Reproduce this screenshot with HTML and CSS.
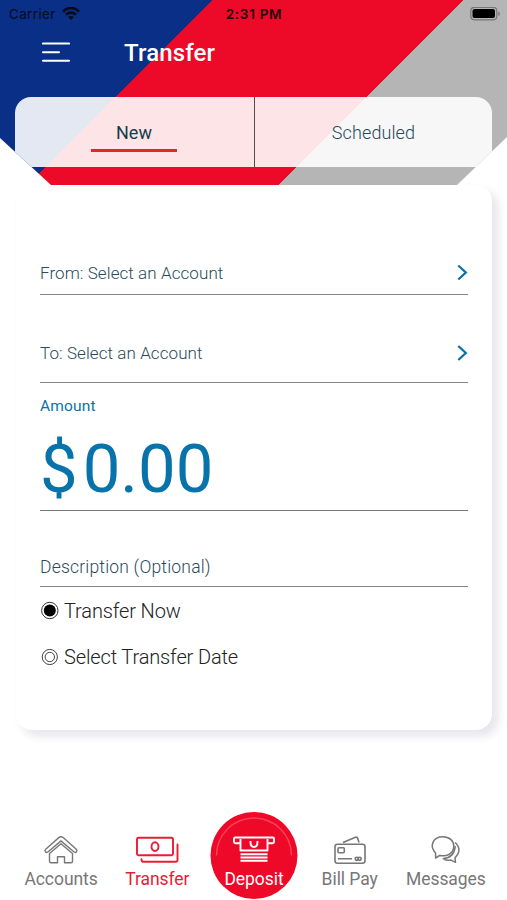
FILE: index.html
```html
<!DOCTYPE html>
<html lang="en">
<head>
<meta charset="utf-8">
<title>Transfer</title>
<link rel="stylesheet" href="styles.css">
</head>
<body>
<div class="screen">
  <header class="header">
    <div class="status">
      <div class="carrier"><span>Carrier</span>
        <svg width="18" height="14" viewBox="0 0 18 14" fill="none" stroke="#070b1c" stroke-width="2.6"><path d="M1 4.600C5.500-.2 12.500-.2 17 4.600"/><path d="M4 7.700c2.800-2.800 7.200-2.800 10 0"/><path d="M9 13.100 6.100 10.100c1.600-1.500 4.200-1.500 5.800 0z" fill="#070b1c" stroke="none"/></svg>
      </div>
      <div class="time">2:31 PM</div>
      <div class="battery">
        <svg width="31" height="14" viewBox="0 0 31 14"><rect x=".8" y=".3" width="26" height="12.500" rx="3.500" fill="none" stroke="#777" stroke-width="1.200"/><rect x="2.500" y="2" width="22.500" height="9" rx="2" fill="#000"/><path d="M28.300 4.400c2 .8 2 3.800 0 4.600z" fill="#777"/></svg>
      </div>
    </div>
    <div class="titlebar">
      <svg class="menu" width="28" height="22" viewBox="0 0 28 22" stroke="#fff" stroke-width="2.100" stroke-linecap="round"><path d="M1 1.500H27M1 10.200H17M1 18.700H27"/></svg>
      <h1>Transfer</h1>
    </div>
    <nav class="tabs">
      <div class="tab active"><span>New</span></div>
      <div class="tab"><span>Scheduled</span></div>
    </nav>
  </header>
  <main class="card">
    <div class="row from"><span>From: Select an Account</span><svg width="12" height="18" viewBox="0 0 12 18"><path d="M2.300 1.500l7.500 7-7.500 7" fill="none" stroke="#0873aa" stroke-width="2.300"/></svg></div>
    <div class="row to"><span>To: Select an Account</span><svg width="12" height="18" viewBox="0 0 12 18"><path d="M2.300 2l7.500 7-7.500 7" fill="none" stroke="#0873aa" stroke-width="2.300"/></svg></div>
    <div class="amount">
      <div class="label">Amount</div>
      <div class="value"><span class="currency">$</span><span class="digits">0.00</span></div>
    </div>
    <div class="row description"><span>Description (Optional)</span></div>
    <div class="option now">
      <svg width="20" height="20" viewBox="0 0 20 20"><circle cx="9.800" cy="9.500" r="8.200" fill="#fff" stroke="#333" stroke-width="1"/><circle cx="9.800" cy="9.500" r="6" fill="#000"/></svg>
      <span>Transfer Now</span>
    </div>
    <div class="option later">
      <svg width="20" height="20" viewBox="0 0 20 20" fill="none" stroke="#444" stroke-width="1"><circle cx="9.800" cy="10" r="7.600"/><circle cx="9.800" cy="10" r="4.700"/></svg>
      <span>Select Transfer Date</span>
    </div>
  </main>
  <footer class="bottom">
    <div class="item">
      <svg width="44" height="34" viewBox="0 0 44 34" fill="none" stroke="#777" stroke-width="1.400" stroke-linejoin="round"><path d="M22 4.700c-.8 0-1.500.3-2.200.9L6.700 17.200c-1.800 1.800.4 4.300 2.500 2.600L22 8.900l12.800 10.900c2.100 1.700 4.300-.8 2.500-2.600L24.200 5.600c-.7-.6-1.400-.9-2.200-.9z"/><path d="M10.500 21.500v7.700q0 1.500 1.500 1.500h6.500v-6h7v6H32q1.500 0 1.500-1.500v-7.700L22 11.800z"/></svg>
      <span>Accounts</span>
    </div>
    <div class="item current">
      <svg width="44" height="34" viewBox="0 0 44 34" fill="none" stroke="#e81c35" stroke-width="1.900" stroke-linejoin="round" stroke-linecap="round"><rect x="2" y="5.800" width="36" height="17.500" rx="1.500"/><ellipse cx="20" cy="14.600" rx="3.500" ry="4.400"/><path d="M42.500 12.500V28q0 1.800-1.800 1.800H8q-1.500 0-1.500-2.500"/></svg>
      <span>Transfer</span>
    </div>
    <div class="item deposit">
      <svg class="arc" width="88" height="88" viewBox="0 0 88 88" fill="none"><circle cx="44" cy="43.500" r="43.500" fill="#ee0928"/><path d="M6.500 43.500a37.500 37.500 0 0 1 75 0" stroke="#ff4059" stroke-width="1.400"/></svg>
      <svg class="slot" width="44" height="34" viewBox="0 0 44 34" fill="none" stroke="#fff" stroke-width="1.900" stroke-linejoin="round"><path d="M7.500 11.300H3.500q-1.500 0-1.500-1.500V6.700q0-1.200 1.200-1.200h37.600q1.200 0 1.200 1.200v3.100q0 1.500-1.500 1.500H36.500M8.500 7v11.500h27V7M18.500 9v1q0 5 3.500 5t3.500-5V9M8.500 22.300h27M8.500 25.500h27M8.500 28.700h27"/></svg>
      <span>Deposit</span>
    </div>
    <div class="item">
      <svg width="44" height="34" viewBox="0 0 44 34" fill="none" stroke="#777" stroke-width="1.600" stroke-linejoin="round"><rect x="7" y="12.300" width="30" height="19" rx="2.500"/><rect x="10" y="15.800" width="6.300" height="5" rx="1"/><path d="M15 10.600 27.500 5.300q1.700-.5 2.200 1l1.300 4.300M10 26.800h14"/><circle cx="28.800" cy="26.800" r="1.600"/><circle cx="31.600" cy="26.800" r="1.600"/></svg>
      <span>Bill Pay</span>
    </div>
    <div class="item">
      <svg width="44" height="34" viewBox="0 0 44 34" fill="none" stroke="#777" stroke-width="1.500" stroke-linejoin="round"><path d="M11.600 26V21C4.800 13.700 9.300 4.700 18.800 4.700c6.500 0 11 4 11 9.500 0 7-7 11-14 9.200z"/><path d="M31 10.500c5.200 4.200 5.200 10.300 0 15.200l.5 4.600-4.500-2.200q-4.700.8-7.700-1.500 10.800-.7 12-12.400"/></svg>
      <span>Messages</span>
    </div>
  </footer>
</div>
</body>
</html>
```
FILE: styles.css
```css
* { box-sizing: border-box; }
body { margin: 0; background: #fff; font-family: Roboto, sans-serif; }
.screen { width: 507px; height: 900px; display: flex; flex-direction: column; overflow: hidden; }
.header {
  height: 185px; flex: none;
  background: linear-gradient(135deg, #092f86 0 150.600px, #ed0928 150.600px 327.400px, #b5b5b5 327.400px);
  clip-path: polygon(0 0, 507px 0, 507px 137px, 457px 185px, 51px 185px, 0 138px);
}
.status { height: 28px; display: grid; grid-template-columns: 1fr auto 1fr; align-items: center; padding: 0 6px 0 9px; font-family: Inter, sans-serif; font-size: 13.300px; color: #070b1c; }
.carrier { display: flex; align-items: center; gap: 6px; letter-spacing: .45px; }
.time { font-weight: 600; font-size: 13.600px; letter-spacing: .65px; color: #22070b; margin-right: 2px; }
.battery { display: flex; justify-content: flex-end; }
.titlebar { height: 69px; padding: 0 42px 20px; display: flex; align-items: center; gap: 54px; }
h1 { margin: 1px 0 0; color: #fff; font-size: 24px; font-weight: 500; letter-spacing: .15px; line-height: 28px; }
.tabs { margin: 0 15px; height: 69.500px; border-radius: 16px 16px 0 0; display: grid; grid-template-columns: 239px 1fr; background: rgba(255,255,255,.89); overflow: hidden; }
.tab { display: flex; flex-direction: column; align-items: center; padding-top: 24px; font-size: 18px; line-height: 24px; font-weight: 300; color: #28475a; letter-spacing: .1px; }
.tab.active { color: #153c4c; font-weight: 400; padding-right: 1px; }
.tab + .tab { border-left: 1px solid #564b50; }
.active::after { content: ""; width: 86px; height: 2.500px; margin-top: 4px; background: #d3301f; }
.card { flex: none; margin: 0 15px 0 16px; height: 545px; padding: 67px 24px 0; border-radius: 16px; box-shadow: 6px 6px 10px rgba(45,45,90,.12); }
.row { display: flex; justify-content: space-between; align-items: center; border-bottom: 1.500px solid #858585; font-size: 17px; font-weight: 300; color: #294b59; letter-spacing: .08px; }
.from { height: 43px; }
.to { height: 88px; padding-top: 29px; }
.amount { height: 128px; border-bottom: 1px solid #777; color: #0873aa; padding-top: 12px; }
.label { font-size: 15.500px; line-height: 22px; letter-spacing: .15px; }
.value { font-size: 67px; line-height: 80px; display: flex; gap: 5px; margin-top: 12px; }
.digits { letter-spacing: 0; }
.description { height: 76px; padding-top: 37px; font-size: 17.500px; letter-spacing: .2px; }
.option { display: flex; align-items: center; gap: 4px; height: 46.500px; font-size: 20px; letter-spacing: -.13px; font-weight: 300; color: #222; }
.now { padding-top: 1px; }
.bottom { height: 92px; margin: 78px 13px 0; display: grid; grid-template-columns: repeat(5, 1fr); position: relative; }
.item { position: relative; display: flex; flex-direction: column; align-items: center; padding-top: 24px; color: #777; font-size: 17.500px; line-height: 22px; white-space: nowrap; }
.item span { margin-top: 1.500px; position: relative; letter-spacing: -.05px; }
.current { color: #e81c35; }
.deposit { color: #fff; padding-left: 1px; }
.slot { position: relative; }
.arc { position: absolute; top: 4px; left: calc(50% + 1px); transform: translateX(-50%); }
```
